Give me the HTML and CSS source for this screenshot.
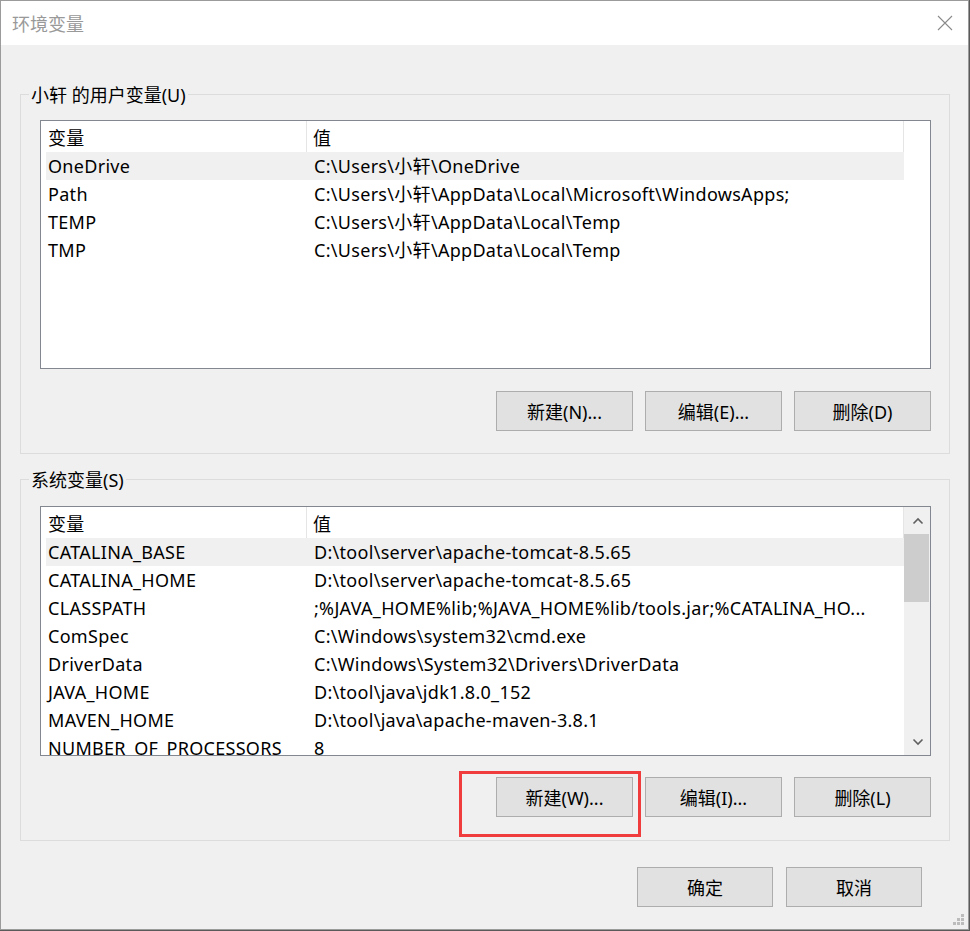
FILE: index.html
```html
<!DOCTYPE html>
<html lang="zh-CN">
<head>
<meta charset="utf-8">
<title>环境变量</title>
<link rel="stylesheet" href="styles.css">
</head>
<body>
<div class="window">
  <div class="titlebar">
    <span class="title">环境变量</span>
    <svg class="close" width="16" height="16" viewBox="0 0 16 16"><path d="M1 1 L15 15 M15 1 L1 15" stroke="#8a8a8a" stroke-width="1.1" fill="none"/></svg>
  </div>
  <div class="content">
    <div class="group group-user">
      <div class="legend">小轩 的用户变量(U)</div>
      <div class="listbox listbox-user">
        <div class="table">
          <div class="head"><div class="hcell c1">变量</div><div class="hcell c2">值</div></div>
          <div class="row hot"><div class="cell c1">OneDrive</div><div class="cell c2">C:\Users\小轩\OneDrive</div></div>
          <div class="row"><div class="cell c1">Path</div><div class="cell c2">C:\Users\小轩\AppData\Local\Microsoft\WindowsApps;</div></div>
          <div class="row"><div class="cell c1">TEMP</div><div class="cell c2">C:\Users\小轩\AppData\Local\Temp</div></div>
          <div class="row"><div class="cell c1">TMP</div><div class="cell c2">C:\Users\小轩\AppData\Local\Temp</div></div>
        </div>
      </div>
      <div class="buttons buttons-user">
        <div class="btn">新建(N)...</div>
        <div class="btn">编辑(E)...</div>
        <div class="btn">删除(D)</div>
      </div>
    </div>

    <div class="group group-sys">
      <div class="legend">系统变量(S)</div>
      <div class="listbox listbox-sys">
        <div class="table">
          <div class="head"><div class="hcell c1">变量</div><div class="hcell c2">值</div></div>
          <div class="row hot"><div class="cell c1">CATALINA_BASE</div><div class="cell c2">D:\tool\server\apache-tomcat-8.5.65</div></div>
          <div class="row"><div class="cell c1">CATALINA_HOME</div><div class="cell c2">D:\tool\server\apache-tomcat-8.5.65</div></div>
          <div class="row"><div class="cell c1">CLASSPATH</div><div class="cell c2">;%JAVA_HOME%lib;%JAVA_HOME%lib/tools.jar;%CATALINA_HO...</div></div>
          <div class="row"><div class="cell c1">ComSpec</div><div class="cell c2">C:\Windows\system32\cmd.exe</div></div>
          <div class="row"><div class="cell c1">DriverData</div><div class="cell c2">C:\Windows\System32\Drivers\DriverData</div></div>
          <div class="row"><div class="cell c1">JAVA_HOME</div><div class="cell c2">D:\tool\java\jdk1.8.0_152</div></div>
          <div class="row"><div class="cell c1">MAVEN_HOME</div><div class="cell c2">D:\tool\java\apache-maven-3.8.1</div></div>
          <div class="row"><div class="cell c1">NUMBER_OF_PROCESSORS</div><div class="cell c2">8</div></div>
        </div>
        <div class="scrollbar">
          <div class="sb-arrow"><svg width="12" height="8" viewBox="0 0 12 8"><polyline points="1.5,6.5 6,2 10.5,6.5" stroke="#606060" stroke-width="1.6" fill="none"/></svg></div>
          <div class="sb-thumb"></div>
          <div class="sb-track"></div>
          <div class="sb-arrow"><svg width="12" height="8" viewBox="0 0 12 8"><polyline points="1.5,1.5 6,6 10.5,1.5" stroke="#606060" stroke-width="1.6" fill="none"/></svg></div>
        </div>
      </div>
      <div class="buttons buttons-sys">
        <div class="btn btn-marked">新建(W)...<span class="mark"></span></div>
        <div class="btn">编辑(I)...</div>
        <div class="btn">删除(L)</div>
      </div>
    </div>

    <div class="footer">
      <div class="btn btn-foot">确定</div>
      <div class="btn btn-foot">取消</div>
    </div>
  </div>
  <svg class="grip" width="12" height="12" viewBox="0 0 12 12">
    <rect x="8" y="0" width="3" height="3" fill="#bcbcbc"/>
    <rect x="4" y="4" width="3" height="3" fill="#bcbcbc"/>
    <rect x="8" y="4" width="3" height="3" fill="#bcbcbc"/>
    <rect x="0" y="8" width="3" height="3" fill="#bcbcbc"/>
    <rect x="4" y="8" width="3" height="3" fill="#bcbcbc"/>
    <rect x="8" y="8" width="3" height="3" fill="#bcbcbc"/>
  </svg>
</div>
</body>
</html>
```
FILE: styles.css
```css
html, body {
  margin: 0;
  padding: 0;
  background: #5a5a5a;
}
body {
  width: 970px;
  height: 931px;
  overflow: hidden;
  font-family: "Noto Sans", "Noto Sans CJK SC", sans-serif;
  font-size: 18px;
  letter-spacing: 0.3px;
  color: #000;
}
.window {
  position: relative;
  width: 967px;
  height: 928px;
  border: 1px solid #9b9b9b;
  background: #f0f0f0;
  display: flex;
  flex-direction: column;
}
.titlebar {
  height: 44px;
  background: #fff;
  display: flex;
  align-items: center;
  justify-content: space-between;
  padding: 0 15px 0 11px;
  flex: none;
}
.title {
  font-size: 18px;
  letter-spacing: 0;
  color: #999;
  font-family: "Noto Sans CJK SC", sans-serif;
  line-height: 24px;
}
.close {
  display: block;
}
.content {
  display: flex;
  flex-direction: column;
  padding-left: 19px;
}
.group {
  width: 930px;
  box-sizing: border-box;
  border: 1px solid #dcdcdc;
  padding: 0 18px 0 19px;
  display: flex;
  flex-direction: column;
}
.group-user {
  margin-top: 49px;
  padding-bottom: 22px;
}
.group-sys {
  margin-top: 25px;
  padding-bottom: 23px;
}
.legend {
  align-self: flex-start;
  margin: -12px 0 0 -11px;
  padding: 0 2px;
  height: 24px;
  line-height: 24px;
  background: #f0f0f0;
  white-space: nowrap;
  letter-spacing: 0;
}
.listbox {
  width: 891px;
  box-sizing: border-box;
  border: 1px solid #828790;
  background: #fff;
  display: flex;
  overflow: hidden;
}
.listbox-user {
  margin-top: 13px;
  height: 249px;
}
.listbox-sys {
  margin-top: 14px;
  height: 250px;
}
.table {
  width: 863px;
  flex: none;
  display: flex;
  flex-direction: column;
}
.head {
  display: flex;
  height: 31px;
  flex: none;
}
.hcell {
  line-height: 30px;
  padding-top: 2px;
  box-sizing: border-box;
  white-space: nowrap;
}
.hcell.c1 {
  width: 266px;
  padding-left: 7px;
  border-right: 1px solid #e5e5e5;
}
.hcell.c2 {
  flex: 1;
  padding-left: 6px;
  border-right: 1px solid #e5e5e5;
}
.row {
  display: flex;
  height: 28px;
  margin-left: 5px;
  flex: none;
}
.row.hot {
  background: #f0f0f0;
}
.cell {
  line-height: 28px;
  white-space: nowrap;
  overflow: hidden;
}
.cell.c1 {
  width: 261px;
  padding-left: 2px;
  box-sizing: border-box;
}
.cell.c2 {
  flex: 1;
  padding-left: 7px;
}
.scrollbar {
  width: 26px;
  flex: none;
  background: #f0f0f0;
  display: flex;
  flex-direction: column;
}
.sb-arrow {
  height: 27px;
  display: flex;
  align-items: center;
  justify-content: center;
  flex: none;
}
.sb-arrow svg {
  display: block;
  margin-left: 1px;
}
.sb-thumb {
  height: 68px;
  background: #cdcdcd;
  margin-right: 1px;
  flex: none;
}
.sb-track {
  flex: 1;
}
.buttons {
  width: 891px;
  display: flex;
  justify-content: flex-end;
  gap: 12px;
}
.buttons-user {
  margin-top: 22px;
}
.buttons-sys {
  margin-top: 21px;
}
.btn {
  position: relative;
  width: 137px;
  height: 40px;
  box-sizing: border-box;
  border: 1px solid #adadad;
  background: #e1e1e1;
  display: flex;
  align-items: center;
  justify-content: center;
  white-space: nowrap;
  letter-spacing: 0;
}
.mark {
  position: absolute;
  left: -38px;
  top: -7px;
  width: 182px;
  height: 66px;
  box-sizing: border-box;
  border: 3px solid #f03c3c;
}
.footer {
  display: flex;
  justify-content: flex-end;
  gap: 13px;
  margin-top: 26px;
  margin-right: 46px;
}
.btn-foot {
  width: 136px;
}
.grip {
  position: absolute;
  right: 3px;
  bottom: 3px;
}
```
